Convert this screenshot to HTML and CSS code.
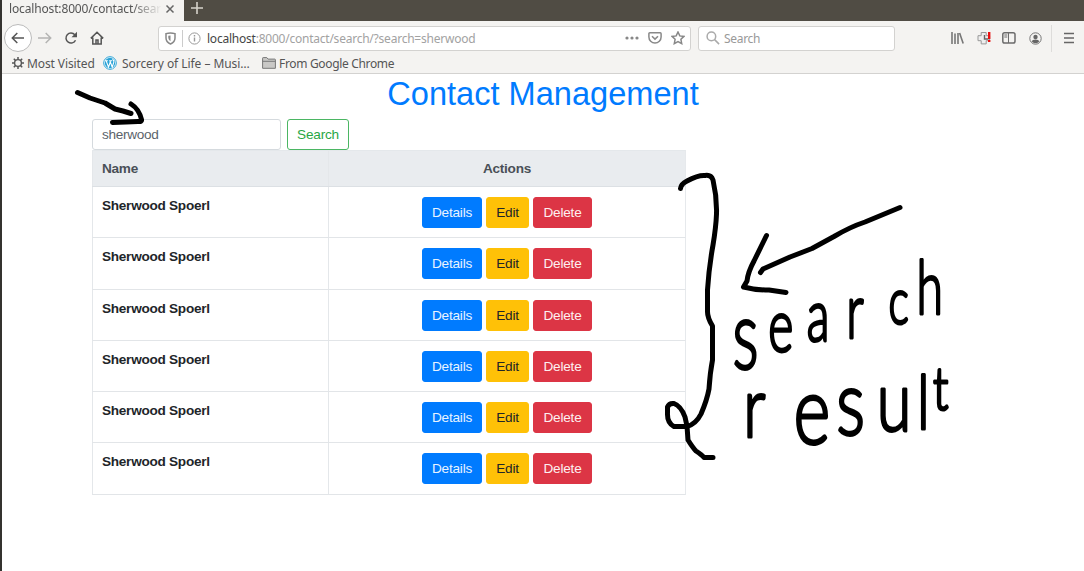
FILE: index.html
```html
<!DOCTYPE html>
<html lang="en">
<head>
<meta charset="utf-8">
<title>Contact Management</title>
<link rel="stylesheet" href="styles.css">
</head>
<body>
<div class="window">
  <header class="chrome">
    <div class="tabs">
      <div class="tab"><span class="tab-title">localhost:8000/contact/sear</span>
        <svg class="tab-close" width="10" height="10" viewBox="0 0 10 10"><path d="M1.5 1.5l7 7M8.5 1.5l-7 7" stroke="#666" stroke-width="1.5"/></svg>
      </div>
      <svg class="tab-new" width="12" height="12" viewBox="0 0 12 12"><path d="M6 0v12M0 6h12" stroke="#d6d3cb" stroke-width="1.6"/></svg>
    </div>
    <div class="toolbar">
      <div class="back"><svg width="14" height="12" viewBox="0 0 14 12" class="line dark"><path d="M13 6H1.5M6.3 1L1.3 6l5 5"/></svg></div>
      <svg class="line pale forward" width="14" height="12" viewBox="0 0 14 12"><path d="M0 6h12.5M7.7 1l5 5-5 5"/></svg>
      <svg class="line dark reload" width="14" height="14" viewBox="0 0 14 14"><path d="M11.5 9.2A5 5 0 1 1 10.8 3.8L12 5"/><path d="M13 .8v5.5H7.5z" fill="#555" stroke="none"/></svg>
      <svg class="line dark home" width="14" height="14" viewBox="0 0 14 14"><path d="M.8 7.4L7 1.3l6.2 6.1M2.8 6.5v6.6h8.4V6.5M6 13V9h2v4"/></svg>
      <div class="address">
        <svg class="line grey" width="11" height="13" viewBox="0 0 11 13"><path d="M1 1.6Q5.500.2 10 1.6V6Q10 10 5.5 12Q1 10 1 6z"/><path d="M5.5 3.5v5.7Q3.5 8 3.3 6V3.8z" fill="#888" stroke="none"/></svg>
        <i class="divider"></i>
        <svg class="info" width="13" height="13" viewBox="0 0 13 13"><circle cx="6.5" cy="6.5" r="5.6" fill="none" stroke="#999"/><path d="M6.5 5.6v4M6.5 3v1.5" stroke="#999" stroke-width="1.4"/></svg>
        <span class="url"><b>localhost</b>:8000/contact/search/?search=sherwood</span>
        <svg class="dots" width="14" height="4" viewBox="0 0 14 4" fill="#888"><circle cx="2" cy="2" r="1.6"/><circle cx="7" cy="2" r="1.6"/><circle cx="12" cy="2" r="1.6"/></svg>
        <svg class="line grey pocket" width="14" height="12" viewBox="0 0 14 12"><path d="M1.8.8h10.4q.9 0 .9.9V5a6.1 6.1 0 0 1-12.2 0V1.7q0-.9.9-.9zM4 4.2l3 2.9 3-2.9"/></svg>
        <svg class="line grey" width="14" height="14" viewBox="0 0 14 14"><path d="M7 1l1.8 3.9 4.2.5-3.1 2.9.8 4.3L7 10.5l-3.7 2.1.8-4.3L1 5.4l4.2-.5z"/></svg>
      </div>
      <div class="searchbar">
        <svg width="14" height="14" viewBox="0 0 14 14" fill="none" stroke="#aaa" stroke-width="1.5"><circle cx="5.4" cy="5.4" r="4.3"/><path d="M8.6 8.6l4.5 4.5"/></svg>
        <span>Search</span>
      </div>
      <svg class="library" width="13" height="12" viewBox="0 0 13 12" stroke="#777" stroke-width="1.6"><path d="M1 0v12M4 1.5V12M7 1v11M8.6 1l3.6 10.6"/></svg>
      <svg class="clock" width="14" height="14" viewBox="0 0 14 14"><path d="M4.2 1.5h5v3.2h3.4v5H9.2v3.2h-5V9.7H1V4.7h3.2z" fill="#eee" stroke="#999"/><path d="M7.5 4v4h4" fill="none" stroke="#666" stroke-width="1.4"/><path d="M12.2 1v7M12.2 9v2" stroke="#e91010" stroke-width="2.4"/></svg>
      <svg class="line mid sidebar" width="14" height="12" viewBox="0 0 14 12"><rect x=".8" y=".8" width="12.2" height="10.2" rx="1.8"/><path d="M6.500 1v10M2.3 3h3M2.3 5h3" stroke-width="1"/></svg>
      <svg class="account" width="13" height="13" viewBox="0 0 13 13"><circle cx="6.5" cy="6.5" r="5.7" fill="none" stroke="#777"/><circle cx="6.5" cy="5" r="2.2" fill="#666"/><path d="M2.6 9.3Q3.4 7.4 6.5 7.4T10.4 9.3Q9 11.2 6.5 11.2T2.6 9.3z" fill="#666"/></svg>
      <i class="menu-divider"></i>
      <svg width="10" height="12" viewBox="0 0 10 12" stroke="#666" stroke-width="1.5"><path d="M0 1.5h10M0 6h10M0 10.5h10"/></svg>
    </div>
    <nav class="bookmarks">
      <svg width="12" height="12" viewBox="0 0 12 12" fill="none" stroke="#555"><circle cx="6" cy="6" r="3.4" stroke-width="1.4"/><path d="M6 0v2.5M6 9.5V12M0 6h2.5M9.5 6H12M1.8 1.8l1.7 1.7M8.5 8.5l1.7 1.7M1.8 10.2l1.7-1.7M8.5 3.5l1.7-1.7" stroke-width="1.5"/></svg>
      <span class="bm-most">Most Visited</span>
      <svg width="14" height="14" viewBox="0 0 14 14" fill="none"><circle cx="7" cy="7" r="6.3" fill="#fff" stroke="#28a2d6"/><circle cx="7" cy="7" r="5.2" fill="#28a2d6"/><path d="M2 4.7h2.8M3.2 4.9l2.3 6.3L7.3 6M6.2 4.7h3M7 4.9l2.2 6.3 1.7-5.4Q10.7 4 9.5 3.3" stroke="#fff" stroke-width="1.1"/></svg>
      <span class="bm-life">Sorcery of Life – Musi…</span>
      <svg width="14" height="12" viewBox="0 0 14 12" fill="#c9c8c6" stroke="#777"><path d="M.6 11.3V1.2q0-.6.6-.6h3.6l1.3 1.5h6.7q.6 0 .6.6v8.6zM.6 4.3h12.8"/></svg>
      <span class="bm-chrome">From Google Chrome</span>
    </nav>
  </header>

  <main class="page">
    <h1>Contact Management</h1>
    <div class="container">
      <form class="search-form">
        <input type="text" value="sherwood" aria-label="Search">
        <button type="button" class="btn outline">Search</button>
      </form>
      <div class="grid head"><div>Name</div><div class="actions">Actions</div></div>
      <div class="grid row"><div>Sherwood Spoerl</div><div class="actions"><a class="btn primary">Details</a><a class="btn warning">Edit</a><a class="btn danger">Delete</a></div></div>
      <div class="grid row"><div>Sherwood Spoerl</div><div class="actions"><a class="btn primary">Details</a><a class="btn warning">Edit</a><a class="btn danger">Delete</a></div></div>
      <div class="grid row"><div>Sherwood Spoerl</div><div class="actions"><a class="btn primary">Details</a><a class="btn warning">Edit</a><a class="btn danger">Delete</a></div></div>
      <div class="grid row"><div>Sherwood Spoerl</div><div class="actions"><a class="btn primary">Details</a><a class="btn warning">Edit</a><a class="btn danger">Delete</a></div></div>
      <div class="grid row"><div>Sherwood Spoerl</div><div class="actions"><a class="btn primary">Details</a><a class="btn warning">Edit</a><a class="btn danger">Delete</a></div></div>
      <div class="grid row"><div>Sherwood Spoerl</div><div class="actions"><a class="btn primary">Details</a><a class="btn warning">Edit</a><a class="btn danger">Delete</a></div></div>
    </div>
  </main>
</div>

<svg class="notes" width="1084" height="571" viewBox="0 0 1084 571">
  <g class="pen">
    <path d="M77.5 92.5L90 98L105 103L115 109L123 111L131 113.5M131 104Q139 109 141.5 119.5Q142 122 138 121.5L126 122L112.5 122.5"/>
    <path d="M680.5 188.5Q681 184 687 181Q698 175 705 175.5Q711 174.5 713 180Q717 197 716.5 214Q716 227 713 245Q709 267 707.5 290V310Q707 317 712.5 326V360Q710 373 709 389Q707 400 701 414Q696 424 687 426.5H674Q667 423 667.5 413V407Q669 403 674 403.5Q681 406 685 417L687 426L688 440Q693 448 696 451Q702 455 704 457.5H713"/>
    <path d="M900 207.5L865 222Q850 227 834 236.5L812 248.5L790 257L763 269L760.5 272.5M766.5 235.5L754 261Q748 272 747 281L743.5 287Q755 290 769 290L786 292.5"/>
  </g>
  <text class="hand" transform="scale(.65 1)"><tspan x="1127" y="369" font-size="94">s</tspan><tspan x="1182" y="352" font-size="74">e</tspan><tspan x="1241" y="341" font-size="72">a</tspan><tspan x="1302" y="338" font-size="76">r</tspan><tspan x="1367" y="324" font-size="66">c</tspan><tspan x="1410" y="314" font-size="74">h</tspan></text>
  <text class="hand" transform="scale(.75 1)"><tspan x="991" y="437" font-size="84">r</tspan><tspan x="1058" y="444" font-size="94">e</tspan><tspan x="1115" y="435" font-size="90">s</tspan><tspan x="1169" y="431" font-size="84">u</tspan><tspan x="1223" y="429" font-size="74">l</tspan><tspan x="1244" y="410" font-size="60">t</tspan></text>
</svg>
</body>
</html>
```
FILE: styles.css
```css
* { box-sizing: border-box; }
body { margin: 0; background: #fff; overflow: hidden; font-family: "Liberation Sans", Arial, sans-serif; }
svg { flex: none; }
.window { height: 571px; border-left: 2px solid #34322f; }
.chrome { height: 74px; background: #f4f3f1; border-bottom: 1px solid #d3d2d0; font-family: "Noto Sans", sans-serif; font-size: 12px; color: #555; }
.tabs { display: flex; height: 21px; background: #504c44; }
.tab { display: flex; align-items: center; width: 182px; padding: 0 9px 4px 7px; background: #f4f3f1; }
.tab-title { width: 153px; margin-right: 3px; white-space: nowrap; line-height: 17px; letter-spacing: -.15px; -webkit-mask-image: linear-gradient(90deg, #000 80%, transparent); mask-image: linear-gradient(90deg, #000 80%, transparent); }
.tab-new { margin: 2px 0 0 7px; }
.toolbar { display: flex; align-items: center; height: 33px; padding: 1px 0 0 2px; }
.line { fill: none; stroke-width: 1.5; }
.dark { stroke: #555; }
.mid { stroke: #6c6c6c; }
.grey { stroke: #888; }
.pale { stroke: #b4b4b3; }
.back { display: flex; align-items: center; justify-content: center; width: 28px; height: 28px; border: 1px solid #bbb; border-radius: 50%; background: #fff; }
.forward { margin-left: 6px; }
.reload { margin-left: 12px; }
.home { margin-left: 12px; }
.address, .searchbar { display: flex; align-items: center; height: 25px; background: #fff; border: 1px solid #d3d2d0; border-radius: 3px; }
.address { width: 533px; margin-left: 54px; padding: 0 5px 0 6px; }
.divider { width: 1px; height: 17px; margin: 0 5px 0 6px; background: #ccc; }
.url { margin-left: 6px; color: #a2a2a2; white-space: nowrap; letter-spacing: -.23px; }
.url b { font-weight: 400; color: #444; }
.dots { margin-left: auto; }
.pocket { margin: 0 9px 0 9px; }
.searchbar { width: 197px; margin-left: 7px; padding-left: 7px; color: #999; letter-spacing: -.3px; }
.searchbar span { margin-left: 4px; }
.library { margin-left: 56px; }
.clock { margin-left: 13px; }
.sidebar { margin-left: 11px; }
.account { margin-left: 13px; }
.menu-divider { width: 1px; height: 27px; margin: 0 12px 0 9px; background: #dddcda; }
.bookmarks { display: flex; align-items: center; height: 18px; padding-left: 10px; white-space: nowrap; }
.bm-most { width: 69px; margin: 0 7px 0 3px; letter-spacing: -.1px; }
.bm-life { width: 128px; margin: 0 12px 0 5px; letter-spacing: -.05px; }
.bm-chrome { margin-left: 3px; letter-spacing: -.33px; }
h1 { margin: 0; height: 45px; padding-top: 1px; font-size: 32.6px; line-height: 38px; font-weight: 400; text-align: center; color: #007bff; }
.container { width: 594px; margin-left: 90px; }
.search-form { display: flex; gap: 6px; height: 31px; }
input { width: 189px; height: 31px; padding: 0 9px; border: 1px solid #d5dade; border-radius: 3px; font: 13.6px "Liberation Sans", Arial, sans-serif; letter-spacing: -.3px; color: #5b636a; }
.btn { display: inline-block; height: 31px; padding: 0; border: 1px solid; border-radius: 3px; text-align: center; font: 13.6px/30px "Liberation Sans", Arial, sans-serif; letter-spacing: -.2px; }
.outline { width: 62px; color: #28a745; border-color: #4bb663; background: #fff; }
.primary { width: 60px; color: #e8f3ff; background: #007bff; border-color: #007bff; }
.warning { width: 43px; color: #212529; background: #ffc107; border-color: #ffc107; }
.danger { width: 59px; color: #fdeff0; background: #dc3545; border-color: #dc3545; }
.grid { display: grid; grid-template-columns: 236px 357px; width: 594px; border-right: 1px solid #e6e9ec; font-size: 13.6px; font-weight: 700; line-height: 19px; letter-spacing: -.27px; color: #212529; }
.grid > div { border-left: 1px solid #e4e7ea; padding: 9px 9px 0; }
.head { height: 37px; background: #e9ecef; border-top: 1px solid #e4e8eb; border-bottom: 1px solid #dce0e4; color: #495057; }
.head > div { padding-top: 8px; }
.row { height: 51.25px; border-bottom: 1px solid #e2e5e8; }
.grid .actions { text-align: center; }
.row .actions { display: flex; justify-content: center; gap: 4px; padding-top: 10px; }
.notes { position: absolute; left: 0; top: 0; pointer-events: none; }
.pen { fill: none; stroke: #000; stroke-width: 5; stroke-linecap: round; stroke-linejoin: round; }
.hand { font-family: Lato, "Noto Sans", sans-serif; font-weight: 300; fill: #000; stroke: #000; stroke-width: 3; stroke-linejoin: round; }
```
